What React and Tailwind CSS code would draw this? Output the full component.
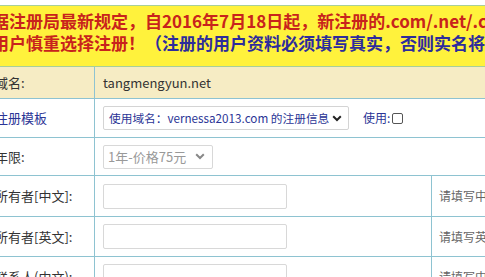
import React from "react";

const font = { fontFamily: '"Noto Sans CJK SC", "Noto Sans", sans-serif' };

function Chevron({ color = "#333" }) {
  return (
    <svg width="10" height="7" viewBox="0 0 10 7" className="shrink-0">
      <path d="M1.2 1.3 L5 5 L8.8 1.3" fill="none" stroke={color} strokeWidth="2" />
    </svg>
  );
}

function Row({ h, bg = "bg-white", label, labelClass = "text-[#333]", children, note }) {
  return (
    <div className={`flex border-b border-[#8ec3d1] ${bg} ${h}`}>
      <div className={`w-[105px] shrink-0 border-r border-[#8ec3d1] flex items-center pl-[5px] text-[13px] ${labelClass}`}>
        {label}
      </div>
      {note !== undefined ? (
        <>
          <div className="w-[337px] shrink-0 border-r border-[#8ec3d1] flex items-center pl-[8px]">{children}</div>
          <div className="flex-1 flex items-center pl-[7px] text-[12px] text-[#666] whitespace-nowrap">{note}</div>
        </>
      ) : (
        <div className="flex-1 flex items-center pl-[8px]">{children}</div>
      )}
    </div>
  );
}

export default function App() {
  return (
    <div className="w-[485px] h-[277px] overflow-hidden bg-white" style={font}>
      <div className="pt-[5px]">
        <div className="border-t border-b border-[#a7cf9a] bg-[#fff23c] h-[62px] pt-[4px] font-bold text-[17px] leading-[22px] whitespace-nowrap overflow-hidden">
          <div className="ml-[-25px] text-[#c8231c]">根据注册局最新规定，自2016年7月18日起，新注册的.com/.net/.cc</div>
          <div className="ml-[-25px]">
            <span className="text-[#c8231c]">请用户慎重选择注册！</span>
            <span className="text-[#2d2c9c]">（注册的用户资料必须填写真实，否则实名将无法</span>
          </div>
        </div>
        <div className="ml-[-10px] w-[560px]">
          <Row h="h-[32px]" bg="bg-[#f6ecc4]" label="域名:">
            <span className="text-[13px] text-[#333]">tangmengyun.net</span>
          </Row>
          <Row h="h-[39px]" label="注册模板" labelClass="text-[#2b3596]">
            <div className="h-[24px] w-[246px] border border-[#d4d4d4] rounded-[2px] bg-white flex items-center justify-between pl-[5px] pr-[6px] text-[11.7px] text-[#2b3596] whitespace-nowrap">
              <span>使用域名：vernessa2013.com 的注册信息</span>
              <Chevron color="#222" />
            </div>
            <span className="ml-[14px] text-[12px] text-[#2b3596]">使用:</span>
            <span className="ml-[2px] w-[11px] h-[11px] border border-[#555] rounded-[2px] bg-white inline-block" />
          </Row>
          <Row h="h-[38px]" label="年限:">
            <div className="h-[24px] w-[110px] border border-[#d8d8d8] rounded-[2px] bg-white flex items-center justify-between pl-[4px] pr-[7px] text-[13px] text-[#999] whitespace-nowrap">
              <span>1年-价格75元</span>
              <Chevron color="#888" />
            </div>
          </Row>
          <Row h="h-[41px]" label="所有者[中文]:" note="请填写中文信息">
            <div className="h-[25px] w-[184px] border border-[#d8d8d8] rounded-[2px] bg-white" />
          </Row>
          <Row h="h-[40px]" label="所有者[英文]:" note="请填写英文信息">
            <div className="h-[25px] w-[184px] border border-[#d8d8d8] rounded-[2px] bg-white" />
          </Row>
          <Row h="h-[40px]" label="联系人(中文):" note="请填写中文信息">
            <div className="h-[25px] w-[184px] border border-[#d8d8d8] rounded-[2px] bg-white" />
          </Row>
        </div>
      </div>
    </div>
  );
}
